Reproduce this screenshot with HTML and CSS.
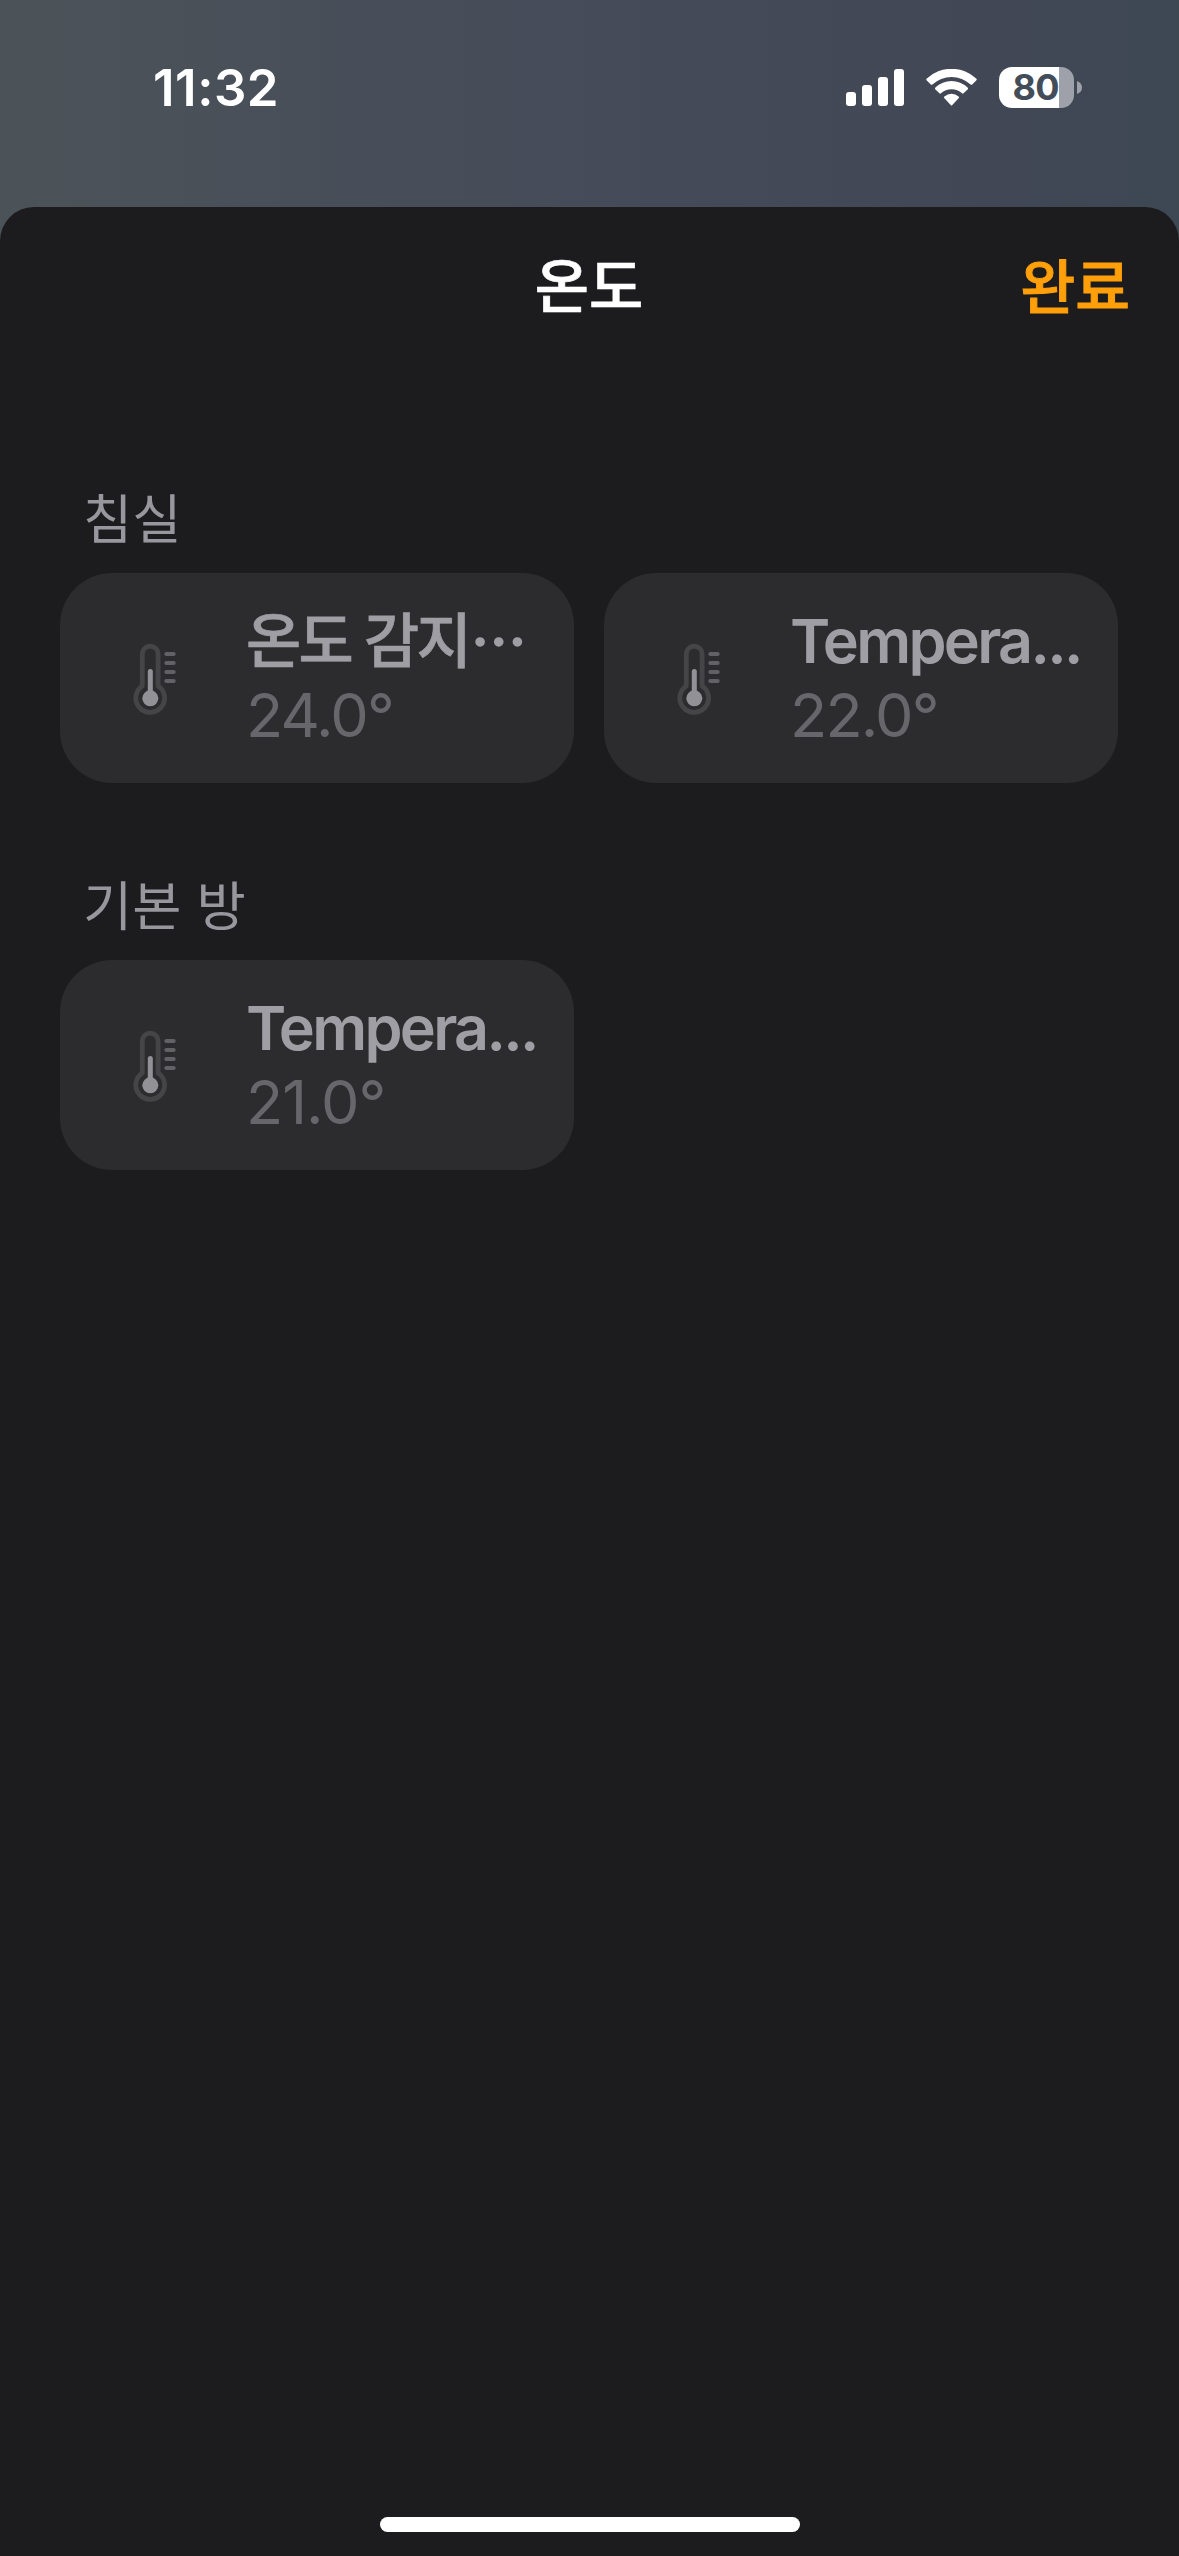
FILE: index.html
```html
<!DOCTYPE html>
<html lang="ko">
<head>
<meta charset="utf-8">
<title>온도</title>
<link rel="stylesheet" href="styles.css">
</head>
<body>
<svg class="defs" width="0" height="0" aria-hidden="true">
  <symbol id="thermometer" viewBox="0 0 46 74">
    <path d="M10.3 11A7.9 7.9 0 0 1 26.1 11V42.9A14.4 14.4 0 1 1 10.3 42.9Z" fill="none" stroke="#454547" stroke-width="4.8" stroke-linejoin="round"/>
    <path d="M18.3 28.5V48" stroke="#929196" stroke-width="5" stroke-linecap="round"/>
    <circle cx="18.3" cy="55.3" r="8" fill="#929196"/>
    <path d="M34.3 11H41.7M34.3 20H41.7M34.3 29H41.7M34.3 38H41.7" stroke="#626165" stroke-width="4" stroke-linecap="round"/>
  </symbol>
</svg>
<div class="screen">
  <header class="status">
    <div class="clock">11:32</div>
    <div class="indicators">
      <svg class="signal" viewBox="0 0 58 37" fill="#fff">
        <rect x="0" y="23" width="10" height="14" rx="3"/>
        <rect x="16" y="16" width="10" height="21" rx="3"/>
        <rect x="32" y="8" width="10" height="29" rx="3"/>
        <rect x="48" y="0" width="10" height="37" rx="3"/>
      </svg>
      <svg class="wifi" viewBox="0 0 51 37" fill="#fff">
        <path d="M.8 11.6Q-.3 10.600 .8 9.600A36 36 0 0 1 50.200 9.600Q51.300 10.600 50.200 11.600L46.200 15.500Q45.400 16.200 44.600 15.500A28 28 0 0 0 6.400 15.500Q5.600 16.200 4.800 15.500Z"/>
        <path d="M9.400 20.400Q8.400 19.400 9.400 18.500A23.500 23.500 0 0 1 41.600 18.500Q42.600 19.400 41.600 20.400L37.600 24.200Q36.800 25 36 24.300A15.500 15.500 0 0 0 15 24.300Q14.200 25 13.400 24.200Z"/>
        <path d="M18.200 29.100Q17.300 28.200 18.400 27.400A11 11 0 0 1 32.600 27.400Q33.700 28.200 32.800 29.100L26.300 36Q25.500 37 24.700 36Z"/>
      </svg>
      <div class="battery">
        <div class="battery-body"><span class="battery-level">80</span></div>
        <svg class="battery-cap" viewBox="0 0 5 13"><path d="M0 0Q5 2 5 6.500T0 13Z" fill="#9fa1aa"/></svg>
      </div>
    </div>
  </header>
  <main class="sheet">
    <div class="navbar">
      <h1 class="title">온도</h1>
      <button class="done">완료</button>
    </div>
    <section class="room">
      <h2 class="room-name">침실</h2>
      <div class="tiles">
        <article class="tile">
          <svg class="icon"><use href="#thermometer"/></svg>
          <div class="info"><div class="name name-ko">온도 감지<span class="dots">⋯</span></div><div class="value">24.0°</div></div>
        </article>
        <article class="tile">
          <svg class="icon"><use href="#thermometer"/></svg>
          <div class="info"><div class="name">Tempera...</div><div class="value">22.0°</div></div>
        </article>
      </div>
    </section>
    <section class="room">
      <h2 class="room-name">기본 방</h2>
      <div class="tiles">
        <article class="tile">
          <svg class="icon"><use href="#thermometer"/></svg>
          <div class="info"><div class="name">Tempera...</div><div class="value value-loose">21.0°</div></div>
        </article>
      </div>
    </section>
    <div class="home-bar"></div>
  </main>
</div>
</body>
</html>
```
FILE: styles.css
```css
* { box-sizing: border-box; margin: 0; padding: 0; }

body {
  width: 1179px;
  height: 2556px;
  background: #1c1c1e;
  font-family: Inter, "Noto Sans CJK KR", sans-serif;
  -webkit-font-smoothing: antialiased;
}

.defs { display: block; }

.screen {
  height: 2556px;
  display: flex;
  flex-direction: column;
  background: linear-gradient(90deg, #4b5358 0, #494f59 300px, #454b58 600px, #414755 1000px, #3d4853 1179px);
}

.status {
  height: 207px;
  flex: none;
  display: flex;
  justify-content: space-between;
  padding: 67px 97px 0 153px;
  color: #fff;
}

.clock {
  height: 42px;
  line-height: 42px;
  font-size: 51px;
  font-weight: 600;
  letter-spacing: 0.5px;
}

.indicators { display: flex; height: 41px; align-items: center; }
.signal { width: 58px; height: 37px; margin-right: 22px; }
.wifi { width: 51px; height: 37px; margin-right: 22px; }
.battery { display: flex; align-items: center; gap: 3px; }

.battery-body {
  width: 75px;
  height: 41px;
  border-radius: 13px;
  background: linear-gradient(90deg, #fff 60px, #9fa1aa 60px);
  color: #434c59;
  font-size: 36px;
  font-weight: 700;
  line-height: 41px;
  padding-left: 13.5px;
}

.battery-level { letter-spacing: -0.7px; }
.battery-cap { width: 5px; height: 13px; }

.sheet {
  flex: 1;
  display: flex;
  flex-direction: column;
  background: #1c1c1e;
  border-radius: 34px 34px 0 0;
  padding: 0 61px 24px 60px;
}

.navbar {
  height: 158px;
  display: grid;
  grid-template-columns: 1fr auto 1fr;
  align-items: center;
  margin: 1px -12px 102px;
}

.title {
  grid-column: 2;
  color: #fff;
  font-size: 59px;
  font-weight: 500;
  line-height: 80px;
  -webkit-text-stroke: 0.7px currentColor;
}

.done {
  justify-self: end;
  border: 0;
  background: none;
  color: #ff9f0a;
  font-family: inherit;
  font-size: 59.5px;
  font-weight: 500;
  line-height: 80px;
  -webkit-text-stroke: 1px currentColor;
}

.room { height: 387px; }

.room-name {
  height: 105px;
  padding-left: 23px;
  color: #98979d;
  font-size: 53.5px;
  font-weight: 400;
  line-height: 103px;
}

.tiles { display: grid; grid-template-columns: 1fr 1fr; gap: 30px; }

.tile {
  height: 210px;
  display: flex;
  border-radius: 52px;
  background: #2c2c2e;
}

.icon { width: 46px; height: 74px; margin: 70px 68px 0 72px; flex: none; }
.info { padding-top: 31px; white-space: nowrap; }

.name {
  height: 74px;
  color: #9f9ea4;
  font-size: 61px;
  font-weight: 600;
  line-height: 74px;
  letter-spacing: -2.7px;
}

.name-ko {
  font-size: 60px;
  font-weight: 500;
  letter-spacing: -2.8px;
  -webkit-text-stroke: 0.7px currentColor;
}

.dots {
  font-size: 56px;
  margin-left: 2px;
  -webkit-text-stroke: 1.5px currentColor;
}

.value {
  height: 74px;
  color: #67666a;
  font-size: 61px;
  font-weight: 400;
  line-height: 74px;
  letter-spacing: -1.8px;
}

.value-loose { letter-spacing: -1px; }

.home-bar {
  width: 420px;
  height: 15px;
  border-radius: 8px;
  background: #fff;
  margin: auto 0 0 320px;
}
```
